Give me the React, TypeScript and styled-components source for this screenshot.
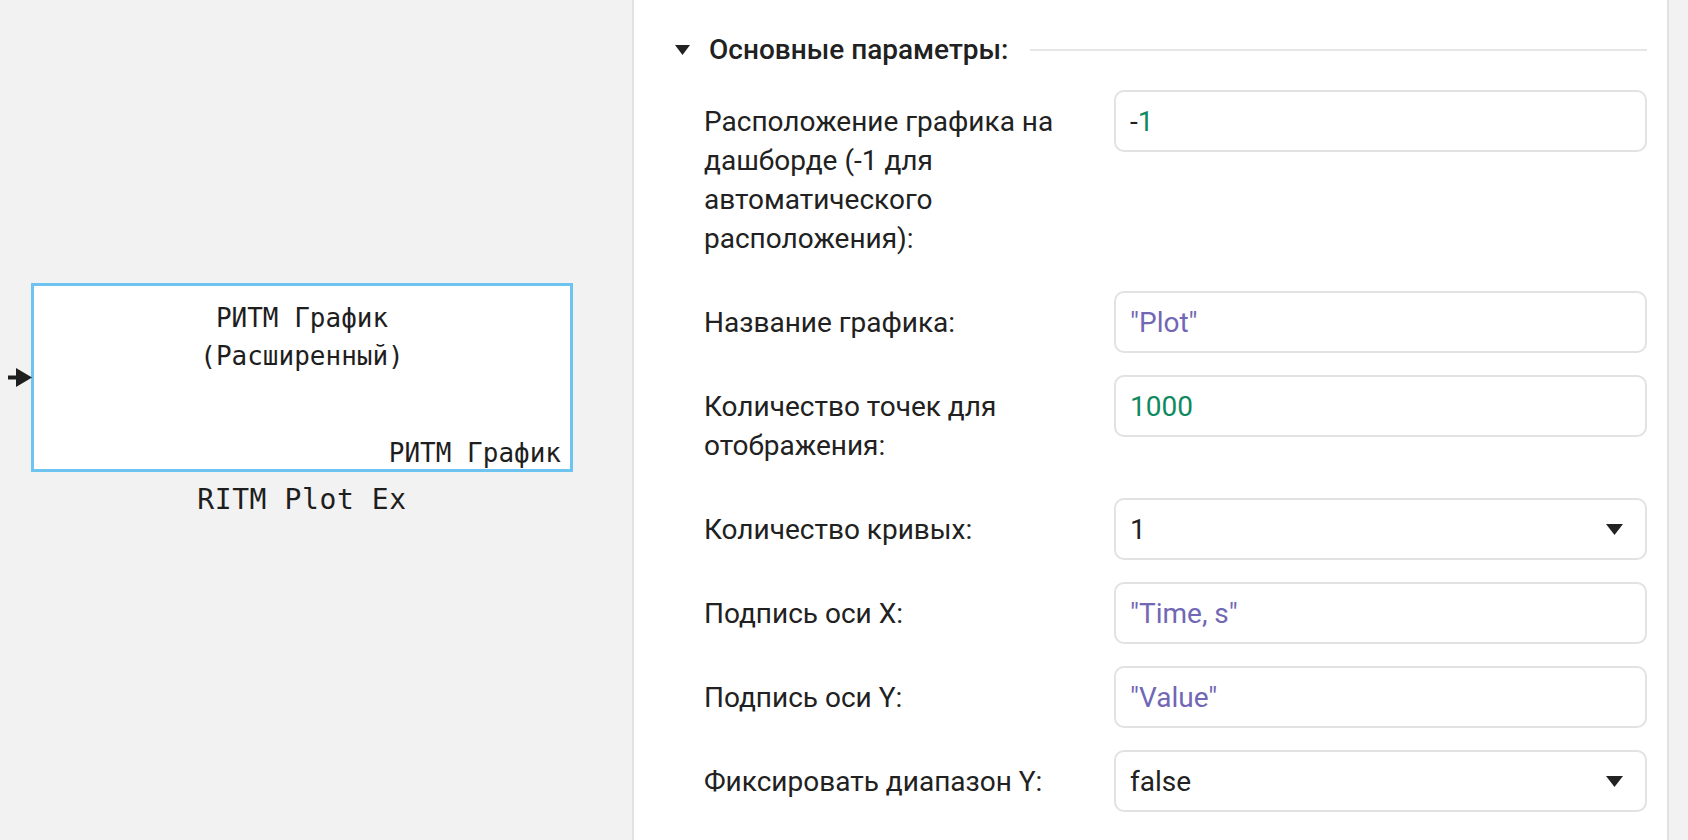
import React from 'react'
import styled, { createGlobalStyle } from 'styled-components'

const GlobalStyle = createGlobalStyle`
  html, body {
    margin: 0;
    padding: 0;
    overflow: hidden;
  }

  body {
    font-family: Roboto, 'Noto Sans', sans-serif;
    color: #212121;
  }
`

const Page = styled.div`
  display: flex;
  height: 840px;
  background: #f2f2f2;
`

/* diagram area, the block keeps its own place on it */
const Canvas = styled.div`
  position: relative;
  flex: 0 0 632px;
`

const Node = styled.div<{ $x: number; $y: number; $w: number }>`
  position: absolute;
  left: ${({ $x }) => $x}px;
  top: ${({ $y }) => $y}px;
  width: ${({ $w }) => $w}px;
  display: flex;
  flex-direction: column;
  align-items: center;
  font-family: 'DejaVu Sans Mono', 'Liberation Mono', monospace;
  color: #1e1e1e;
`

const Block = styled.div`
  box-sizing: border-box;
  width: 100%;
  height: 189px;
  display: flex;
  flex-direction: column;
  background: #fff;
  border: 3px solid #6ec4f0;
  padding: 13px 9px 0 9px;
`

const BlockTitle = styled.div`
  font-size: 26px;
  line-height: 38px;
  text-align: center;
`

const BlockType = styled.div`
  margin-top: auto;
  align-self: flex-end;
  font-size: 26px;
  line-height: 31px;
`

const Caption = styled.div`
  margin-top: 11px;
  font-size: 28px;
  line-height: 34px;
  letter-spacing: 0.6px;
`

const InPort = styled.svg`
  position: absolute;
  left: -23px;
  top: 85px;
`

const Panel = styled.div`
  box-sizing: border-box;
  flex: 0 0 1037px;
  background: #fff;
  border-left: 2px solid #e2e2e2;
  border-right: 2px solid #e2e2e2;
  padding: 30px 20px 0 41px;
`

const SectionHeader = styled.div`
  display: flex;
  align-items: center;
  height: 39px;
`

const Caret = styled.svg`
  flex: none;
  margin-right: 19px;
`

const SectionTitle = styled.span`
  font-size: 28px;
  font-weight: 500;
  color: #212121;
`

const Rule = styled.div`
  flex: 1;
  height: 2px;
  margin-left: 22px;
  background: #e6e6e6;
`

const Form = styled.div`
  display: grid;
  grid-template-columns: 380px 533px;
  column-gap: 30px;
  row-gap: 22px;
  margin-top: 21px;
  padding-left: 29px;
`

const Label = styled.div`
  padding: 11.5px 0;
  font-size: 28px;
  line-height: 39px;
  color: #212121;
`

const Field = styled.div`
  box-sizing: border-box;
  height: 62px;
  display: flex;
  align-items: center;
  justify-content: space-between;
  padding: 0 22px 0 14px;
  border: 2px solid #e2e2e2;
  border-radius: 10px;
  background: #fff;
  font-size: 28px;
`

const Value = styled.span<{ $kind?: 'number' | 'string' | 'plain' }>`
  color: ${({ $kind }) => ($kind === 'number' ? '#0f8a5f' : $kind === 'string' ? '#7167b5' : '#212121')};
`

const Minus = styled.span`
  color: #212121;
`

function DownTriangle({ w, h }: { w: number; h: number }) {
  return (
    <svg width={w} height={h} viewBox={`0 0 ${w} ${h}`}>
      <polygon points={`0,0 ${w},0 ${w / 2},${h}`} fill="#222" />
    </svg>
  )
}

type Row = {
  label: string
  value: string
  kind: 'number' | 'string' | 'plain'
  select?: boolean
}

const rows: Row[] = [
  { label: 'Название графика:', value: '"Plot"', kind: 'string' },
  { label: 'Количество точек для отображения:', value: '1000', kind: 'number' },
  { label: 'Количество кривых:', value: '1', kind: 'plain', select: true },
  { label: 'Подпись оси X:', value: '"Time, s"', kind: 'string' },
  { label: 'Подпись оси Y:', value: '"Value"', kind: 'string' },
  { label: 'Фиксировать диапазон Y:', value: 'false', kind: 'plain', select: true },
]

function App() {
  return (
    <>
      <GlobalStyle />
      <Page>
        <Canvas>
          <Node $x={31} $y={283} $w={542}>
            <InPort width="24" height="19" viewBox="0 0 24 19">
              <rect x="0" y="7.5" width="10" height="4" fill="#1e1e1e" />
              <polygon points="8,0 24,9.5 8,19" fill="#1e1e1e" />
            </InPort>
            <Block>
              <BlockTitle>
                РИТМ График
                <br />
                (Расширенный)
              </BlockTitle>
              <BlockType>РИТМ График</BlockType>
            </Block>
            <Caption>RITM Plot Ex</Caption>
          </Node>
        </Canvas>

        <Panel>
          <SectionHeader>
            <Caret width="15" height="10" viewBox="0 0 15 10">
              <polygon points="0,0 15,0 7.5,10" fill="#222" />
            </Caret>
            <SectionTitle>Основные параметры:</SectionTitle>
            <Rule />
          </SectionHeader>

          <Form>
            <Label>Расположение графика на дашборде (-1 для автоматического расположения):</Label>
            <Field>
              <span>
                <Minus>-</Minus>
                <Value $kind="number">1</Value>
              </span>
            </Field>

            {rows.map((row) => (
              <React.Fragment key={row.label}>
                <Label>{row.label}</Label>
                <Field>
                  <Value $kind={row.kind}>{row.value}</Value>
                  {row.select && <DownTriangle w={17} h={11} />}
                </Field>
              </React.Fragment>
            ))}
          </Form>
        </Panel>
      </Page>
    </>
  )
}

export default App
